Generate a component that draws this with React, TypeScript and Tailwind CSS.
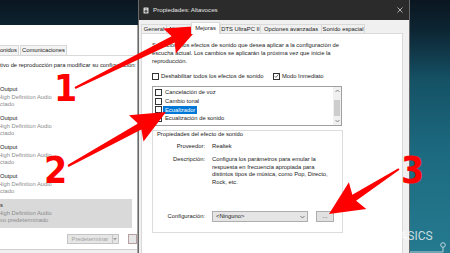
import React from "react";

type Pt = [number, number];

// tapered shaft + triangular head, points for an svg polygon
const arrowPoints = (tail: Pt, tip: Pt, head: number, half: number, wTail: number, wHead: number) => {
  const dx = tip[0] - tail[0];
  const dy = tip[1] - tail[1];
  const len = Math.hypot(dx, dy);
  const ux = dx / len;
  const uy = dy / len;
  const px = -uy;
  const py = ux;
  const bx = tip[0] - ux * head;
  const by = tip[1] - uy * head;
  const pts: Pt[] = [
    [tail[0] + (px * wTail) / 2, tail[1] + (py * wTail) / 2],
    [bx + (px * wHead) / 2, by + (py * wHead) / 2],
    [bx + px * half - ux * 4, by + py * half - uy * 4],
    tip,
    [bx - px * half - ux * 4, by - py * half - uy * 4],
    [bx - (px * wHead) / 2, by - (py * wHead) / 2],
    [tail[0] - (px * wTail) / 2, tail[1] - (py * wTail) / 2],
  ];
  return pts.map((p) => p.map((n) => n.toFixed(1)).join(",")).join(" ");
};

const Check: React.FC<{ checked?: boolean }> = ({ checked }) => (
  <span className="w-[7px] h-[7px] border border-[#333333] bg-white flex items-center justify-center shrink-0">
    {checked && (
      <svg width="6" height="6" viewBox="0 0 6 6">
        <path d="M0.8 3.2 L2.3 4.7 L5.2 1.2" fill="none" stroke="#222" strokeWidth="0.8" />
      </svg>
    )}
  </span>
);

const devices = [
  { name: "Output", status: "ctado" },
  { name: "Output", status: "ctado" },
  { name: "Output", status: "ctado" },
  { name: "Output", status: "ctado" },
];

const effects = ["Cancelación de voz", "Cambio tonal", "Ecualizador", "Ecualización de sonido"];

const tabs = [
  { label: "General", w: "w-[26px]" },
  { label: "Niveles", w: "w-[26px]" },
  { label: "Mejoras", w: "w-[29px]", active: true },
  { label: "DTS UltraPC II", w: "w-[41px]" },
  { label: "Opciones avanzadas", w: "w-[62px]" },
  { label: "Sonido espacial", w: "w-[44px]" },
];

const SoundWindow: React.FC = () => (
  <div className="absolute left-0 top-[25px] w-[138px] h-[228px] bg-white border-r border-[#a3a3a3] overflow-hidden text-[5.8px] text-[#1a1a1a]">
    <div className="h-[20px]" />
    <div className="flex items-end h-[11px] -ml-[6px] border-b border-[#d9d9d9]">
      <div className="h-[10px] w-[25px] border border-b-0 border-[#d9d9d9] bg-[#f3f3f3] flex items-center justify-center">
        Sonidos
      </div>
      <div className="h-[10px] w-[47px] ml-[1px] border border-b-0 border-[#d9d9d9] bg-[#f3f3f3] flex items-center justify-center">
        Comunicaciones
      </div>
    </div>
    <div className="mt-[5px] leading-[8px] whitespace-nowrap">
      tivo de reproducción para modificar su configuración:
    </div>
    <div className="mt-[14px] flex flex-col">
      {devices.map((d, i) => (
        <div key={i} className="h-[29px] pt-[3px] leading-[7.5px] whitespace-nowrap">
          <div className="text-[#1a1a1a]">{d.name}</div>
          <div className="text-[#8c8c8c] -ml-[2px]">High Definition Audio</div>
          <div className="text-[#8c8c8c]">{d.status}</div>
        </div>
      ))}
      <div className="h-[29px] w-[132px] pt-[3px] leading-[7.5px] whitespace-nowrap bg-[#d9d9d9]">
        <div className="text-[#1a1a1a]">s</div>
        <div className="text-[#8c8c8c] -ml-[2px]">High Definition Audio</div>
        <div className="text-[#8c8c8c]">vo predeterminado</div>
      </div>
    </div>
    <div className="mt-[6px] h-[10px] flex pl-[67px]">
      <div className="w-[49px] h-full bg-[#e6e6e6] border border-[#c4c4c4] text-[#a0a0a0] flex items-center justify-center">
        Predeterminar
      </div>
      <div className="w-[6px] h-full bg-[#e6e6e6] border border-l-0 border-[#c4c4c4] flex items-center justify-center">
        <svg width="4" height="3" viewBox="0 0 4 3">
          <path d="M0 0 L4 0 L2 2.5Z" fill="#a0a0a0" />
        </svg>
      </div>
      <div className="ml-[9px] w-[10px] h-full bg-[#e6e6e6] border border-[#b9a0a0]" />
    </div>
    <div className="mt-[5px] border-t border-[#d0d0d0] h-[10px] bg-[#f0f0f0]" />
  </div>
);

const PropertiesWindow: React.FC = () => (
  <div className="absolute left-[138px] top-0 w-[272px] h-[262px] bg-[#f0f0f0] border-x border-[#6a6a6a] flex flex-col text-[#1a1a1a]">
    <div className="h-[20px] shrink-0 bg-[#2b2b2b] flex items-center pl-[4px] text-[6.2px] text-[#e8e8e8]">
      <svg width="6" height="7" viewBox="0 0 6 7">
        <rect x="0.5" y="0.5" width="5" height="6" rx="0.6" fill="#d8d8d8" />
        <circle cx="3" cy="4.3" r="1.4" fill="#555" />
        <circle cx="3" cy="1.9" r="0.6" fill="#555" />
      </svg>
      <span className="ml-[4px]">Propiedades: Altavoces</span>
      <svg className="ml-auto mr-[6px]" width="6" height="6" viewBox="0 0 6 6">
        <path d="M0.5 0.5 L5.5 5.5 M5.5 0.5 L0.5 5.5" stroke="#e8e8e8" strokeWidth="0.7" />
      </svg>
    </div>

    <div className="pt-[2px] pl-[2px] flex items-end h-[13px] shrink-0 text-[5.8px]">
      {tabs.map((t) =>
        t.active ? (
          <div
            key={t.label}
            className={`${t.w} h-[12px] -mb-[1px] relative z-10 bg-white border border-b-0 border-[#d9d9d9] flex items-center justify-center`}
          >
            {t.label}
          </div>
        ) : (
          <div
            key={t.label}
            className={`${t.w} h-[9px] -mr-[1px] bg-[#f0f0f0] border border-b-0 border-[#d9d9d9] flex items-center justify-center whitespace-nowrap`}
          >
            {t.label}
          </div>
        )
      )}
    </div>

    <div className="ml-[2px] w-[262px] flex-1 bg-white border border-[#d9d9d9] pt-[7px] pl-[10px] text-[5.8px]">
      <div className="leading-[8px] whitespace-nowrap">
        Seleccione los efectos de sonido que desea aplicar a la configuración de
        <br />
        escucha actual. Los cambios se aplicarán la próxima vez que inicie la
        <br />
        reproducción.
      </div>

      <div className="mt-[7px] h-[8px] flex items-center">
        <div className="w-[121px] flex items-center gap-[2px]">
          <Check />
          <span>Deshabilitar todos los efectos de sonido</span>
        </div>
        <div className="flex items-center gap-[2px]">
          <Check checked />
          <span>Modo Inmediato</span>
        </div>
      </div>

      <div className="mt-[6px] w-[190px] h-[40px] border border-[#a0a0a0] flex">
        <div className="flex-1 pt-[1px] pl-[2px] flex flex-col">
          {effects.map((e) => (
            <div key={e} className="h-[8.7px] flex items-center">
              <Check />
              {e === "Ecualizador" ? (
                <span className="ml-[1px] px-[2px] bg-[#0078d7] text-white leading-[8px]">{e}</span>
              ) : (
                <span className="ml-[3px]">{e}</span>
              )}
            </div>
          ))}
        </div>
        <div className="w-[8px] bg-[#f0f0f0] flex flex-col items-center">
          <svg className="mt-[2px]" width="5" height="4" viewBox="0 0 5 4">
            <path d="M0.5 3 L2.5 1 L4.5 3" fill="none" stroke="#606060" strokeWidth="0.7" />
          </svg>
          <div className="mt-[7px] h-[16px] w-[6px] bg-[#cdcdcd]" />
          <svg className="mt-auto mb-[2px]" width="5" height="4" viewBox="0 0 5 4">
            <path d="M0.5 1 L2.5 3 L4.5 1" fill="none" stroke="#606060" strokeWidth="0.7" />
          </svg>
        </div>
      </div>

      <div className="mt-[4px] w-[191px] h-[103px] border border-[#dcdcdc] flex flex-col">
        <div className="pl-[4px] leading-[7px]">Propiedades del efecto de sonido</div>
        <div className="grid grid-cols-[52px_1fr] gap-x-[7px]">
          <div className="mt-[4px] leading-[8px] text-right">Proveedor:</div>
          <div className="mt-[4px] leading-[8px]">Realtek</div>
          <div className="mt-[6px] leading-[7.5px] text-right">Descripción:</div>
          <div className="mt-[6px] leading-[7.5px] whitespace-nowrap">
            Configura los parámetros para emular la
            <br />
            respuesta en frecuencia apropiada para
            <br />
            distintos tipos de música, como Pop, Directo,
            <br />
            Rock, etc.
          </div>
          <div className="mt-[25px] h-[11px] flex items-center justify-end">Configuración:</div>
          <div className="mt-[25px] h-[11px] flex items-center">
            <div className="w-[96px] h-[11px] bg-[#e5e5e5] border border-[#adadad] flex items-center pl-[3px] pr-[2px]">
              <span>&lt;Ninguno&gt;</span>
              <svg className="ml-auto" width="5" height="4" viewBox="0 0 5 4">
                <path d="M0.5 1 L2.5 3 L4.5 1" fill="none" stroke="#505050" strokeWidth="0.7" />
              </svg>
            </div>
            <div className="ml-[8px] w-[18px] h-[11px] bg-[#e1e1e1] border border-[#adadad] flex items-center justify-center">
              ...
            </div>
          </div>
        </div>
      </div>
    </div>
  </div>
);

const Annotations: React.FC = () => (
  <>
    <svg className="absolute inset-0 pointer-events-none" width="450" height="253" viewBox="0 0 450 253">
      <polygon points={arrowPoints([75, 88], [200, 26], 30, 14, 2, 7)} fill="#ff0000" />
      <polygon points={arrowPoints([68, 166], [166, 112], 30, 15, 2, 7)} fill="#ff0000" />
      <polygon points={arrowPoints([399, 169], [329, 214], 30, 16, 2, 7)} fill="#ff0000" />
      <circle cx="443" cy="245" r="2.3" fill="none" stroke="#c9dde3" strokeWidth="0.9" />
      <path d="M443 247.3 L443 252 L410 252" fill="none" stroke="#c9dde3" strokeWidth="0.9" />
    </svg>
    <div className="absolute left-[54px] top-[70px] text-[37px] leading-none font-bold text-[#ff0000] font-['Liberation_Sans_Narrow','DejaVu_Sans_Condensed',sans-serif]">
      1
    </div>
    <div className="absolute left-[44px] top-[152px] text-[37px] leading-none font-bold text-[#ff0000] font-['Liberation_Sans_Narrow','DejaVu_Sans_Condensed',sans-serif]">
      2
    </div>
    <div className="absolute left-[401px] top-[152px] text-[37px] leading-none font-bold text-[#ff0000] font-['Liberation_Sans_Narrow','DejaVu_Sans_Condensed',sans-serif]">
      3
    </div>
    <div className="absolute left-[392px] top-[230px] text-[12px] leading-none text-white/75 font-['Roboto',sans-serif]">
      BASICS
    </div>
  </>
);

export default function App() {
  return (
    <div className="relative w-[450px] h-[253px] overflow-hidden font-['Liberation_Sans',Arial,sans-serif] bg-[linear-gradient(180deg,#0a1620_0%,#0d2533_12%,#155266_32%,#1c6a80_60%,#257a8f_100%)]">
      <SoundWindow />
      <PropertiesWindow />
      <Annotations />
    </div>
  );
}
